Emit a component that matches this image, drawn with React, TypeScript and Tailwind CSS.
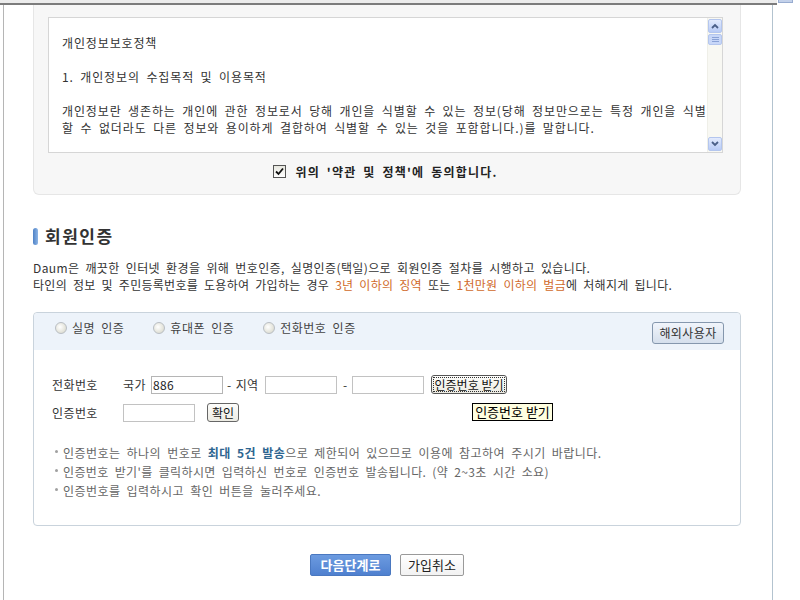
import React from "react";

const ko = "font-['Noto_Sans_CJK_KR','Noto_Sans_CJK_SC',sans-serif]";

const ScrollArrow = ({ up }: { up?: boolean }) => (
    <div className="w-[14px] h-[14px] rounded-[2px] border border-[#b4c6ee] bg-[linear-gradient(#e3ebfd,#b8cbf6)] flex items-center justify-center">
        <svg width="8" height="6" viewBox="0 0 8 6">
            <path d={up ? "M1 5 L4 2 L7 5" : "M1 1 L4 4 L7 1"} stroke="#4a5f88" strokeWidth="1.8" fill="none" />
        </svg>
    </div>
);

const Radio = () => (
    <span className="inline-block w-[12px] h-[12px] rounded-full border border-[#b9bec4] bg-[radial-gradient(circle_at_40%_40%,#ffffff,#d3d3c4)]" />
);

const Dot = () => <span className="inline-block w-[3px] h-[3px] bg-[#a0a0a0] rounded-full ml-[3px] mr-[5px] mb-[3px]" />;

const App = () => {
    return (
        <div className={`relative w-[800px] h-[600px] bg-white overflow-hidden text-[12px] text-[#333] ${ko}`}>
            <div className="h-[3px] w-[777px] bg-[#ececec]" />
            <div className="h-[2px] w-[777px] bg-[#7c7c7c]" />
            <div className="absolute top-0 left-[778px] w-[15px] h-[3px] bg-[#c3d1ea] border border-t-0 border-[#98acd0]" />

            <div className="ml-[3px] w-[770px] h-[595px] border-l border-l-[#b5b5b5] border-r border-r-[#b3c3cf] pl-[29px]">
                {/* terms box */}
                <div className="w-[708px] h-[190px] bg-[#f7f7f7] border border-t-0 border-[#e6e6e6] rounded-b-[6px] pt-[12px] pl-[14px]">
                    <div className="flex w-[675px] h-[136px] border border-[#d6d6d6] bg-white">
                        <div className="flex-1 pl-[13px] pt-[16px] leading-[17px] whitespace-pre text-[#333] tracking-[0.87px] [word-spacing:3px]">
                            <div>개인정보보호정책</div>
                            <div>&nbsp;</div>
                            <div>1. 개인정보의 수집목적 및 이용목적</div>
                            <div>&nbsp;</div>
                            <div>개인정보란 생존하는 개인에 관한 정보로서 당해 개인을 식별할 수 있는 정보(당해 정보만으로는 특정 개인을 식별</div>
                            <div>할 수 없더라도 다른 정보와 용이하게 결합하여 식별할 수 있는 것을 포함합니다.)를 말합니다.</div>
                        </div>
                        <div className="w-[15px] bg-[#f8f8f3] border-l border-[#efefe8] flex flex-col items-center pt-[1px] pb-[1px]">
                            <ScrollArrow up />
                            <div className="w-[14px] h-[11px] mt-[1px] rounded-[2px] border border-[#b4c6ee] bg-[#c8d7f8] flex flex-col items-center justify-center gap-[1px]">
                                <span className="w-[7px] h-[1px] bg-[#8aa2d6]" />
                                <span className="w-[7px] h-[1px] bg-[#8aa2d6]" />
                                <span className="w-[7px] h-[1px] bg-[#8aa2d6]" />
                            </div>
                            <div className="flex-1" />
                            <ScrollArrow />
                        </div>
                    </div>
                    <div className="w-[675px] mt-[10px] h-[17px] flex items-center justify-center">
                        <span className="w-[13px] h-[13px] border border-[#555] bg-[linear-gradient(#e8e8e0,#ffffff)] flex items-center justify-center mr-[9px]">
                            <svg width="9" height="9" viewBox="0 0 9 9">
                                <path d="M1 4.5 L3.5 7 L8 1.5" stroke="#111" strokeWidth="1.8" fill="none" />
                            </svg>
                        </span>
                        <span className="font-bold text-[#222] leading-[17px] tracking-[1.2px] [word-spacing:3px]">위의 '약관 및 정책'에 동의합니다.</span>
                    </div>
                </div>

                {/* heading */}
                <div className="mt-[31px] h-[20px] flex items-center">
                    <span className="w-[5px] h-[17px] rounded-[3px] bg-[linear-gradient(90deg,#4f82c6,#8db5e6)] mr-[7px]" />
                    <span className="text-[17px] font-bold text-[#333] leading-[20px] tracking-[1.5px]">회원인증</span>
                </div>

                <div className="mt-[13px] leading-[17px] whitespace-pre text-[#333] [word-spacing:3px]">
                    <div className="tracking-[0.38px]">Daum은 깨끗한 인터넷 환경을 위해 번호인증, 실명인증(택일)으로 회원인증 절차를 시행하고 있습니다.</div>
                    <div className="tracking-[0.28px]">
                        타인의 정보 및 주민등록번호를 도용하여 가입하는 경우 <span className="text-[#d0692a]">3년 이하의 징역</span> 또는{" "}
                        <span className="text-[#d0692a]">1천만원 이하의 벌금</span>에 처해지게 됩니다.
                    </div>
                </div>

                {/* auth box */}
                <div className="relative mt-[19px] w-[708px] h-[214px] border border-[#c9d3dc] rounded-[4px] overflow-visible">
                    <div className="h-[37px] bg-[#edf3fa] rounded-t-[4px] flex justify-between items-start pl-[21px] pr-[16px]">
                        <div className="flex items-center pt-[6px] h-[17px] box-content leading-[17px] text-[#444] tracking-[0.5px] [word-spacing:3px]">
                            <Radio />
                            <span className="ml-[5px] mr-[29px]">실명 인증</span>
                            <Radio />
                            <span className="ml-[5px] mr-[29px]">휴대폰 인증</span>
                            <Radio />
                            <span className="ml-[5px]">전화번호 인증</span>
                        </div>
                        <button className="mt-[9px] w-[72px] h-[22px] rounded-[3px] border border-[#8597ad] bg-[linear-gradient(#f1f5fb,#d5dfec)] text-[12px] text-[#333] leading-[20px] tracking-[0.4px]">
                            해외사용자
                        </button>
                    </div>

                    <div className="pl-[18px] pt-[25px]">
                        <div className="flex items-center h-[19px] text-[#333] tracking-[0.4px]">
                            <span className="w-[71px]">전화번호</span>
                            <span className="w-[28px]">국가</span>
                            <input
                                readOnly
                                value="886"
                                className="w-[72px] h-[18px] border border-[#b5b5b5] bg-white px-[1px] text-[12px] text-[#222] leading-[16px] outline-none"
                            />
                            <span className="ml-[4px] w-[34px] [word-spacing:1px]">- 지역</span>
                            <input readOnly className="ml-[4px] w-[72px] h-[18px] border border-[#c2c2c2] bg-white outline-none" />
                            <span className="ml-[6px] w-[9px]">-</span>
                            <input readOnly className="w-[72px] h-[18px] border border-[#c2c2c2] bg-white outline-none" />
                            <button className="ml-[7px] w-[76px] h-[19px] rounded-[3px] border border-[#555] bg-[linear-gradient(#fdfdfb,#ecebe3)] p-[1px] text-[12px] text-[#111] tracking-normal">
                                <span className="flex items-center justify-center w-full h-full border border-dotted border-[#333] leading-[13px]">인증번호 받기</span>
                            </button>
                        </div>
                        <div className="flex items-center h-[19px] mt-[9px] text-[#333] tracking-[0.4px]">
                            <span className="w-[71px]">인증번호</span>
                            <input readOnly className="w-[72px] h-[18px] border border-[#c2c2c2] bg-white outline-none" />
                            <button className="ml-[12px] w-[32px] h-[19px] rounded-[3px] border border-[#666] bg-[linear-gradient(#fdfdfb,#ecebe3)] text-[12px] text-[#111] leading-[17px] tracking-normal">
                                확인
                            </button>
                        </div>

                        <div className="mt-[21px] leading-[19px] text-[#666] whitespace-pre [word-spacing:3px]">
                            <div className="flex items-center tracking-[0.45px]">
                                <Dot />
                                인증번호는 하나의 번호로 <span className="font-bold text-[#2d6590]">최대 5건 발송</span>으로 제한되어 있으므로 이용에 참고하여 주시기 바랍니다.
                            </div>
                            <div className="flex items-center tracking-[0.37px]">
                                <Dot />
                                인증번호 받기'를 클릭하시면 입력하신 번호로 인증번호 발송됩니다. (약 2~3초 시간 소요)
                            </div>
                            <div className="flex items-center tracking-[0.45px]">
                                <Dot />
                                인증번호를 입력하시고 확인 버튼을 눌러주세요.
                            </div>
                        </div>
                    </div>

                    <div className="absolute left-[438px] top-[90px] w-[81px] h-[18px] border border-black bg-[#ffffe1] text-[13px] text-black leading-[16px] text-center">
                        인증번호 받기
                    </div>
                </div>

                {/* bottom buttons */}
                <div className="w-[708px] mt-[28px] flex justify-center gap-[9px]">
                    <button className="w-[81px] h-[22px] rounded-[2px] border border-[#4a78c0] bg-[linear-gradient(#6c9be0,#4f80cf)] text-[13px] font-bold text-white leading-[20px]">
                        다음단계로
                    </button>
                    <button className="w-[64px] h-[22px] rounded-[2px] border border-[#9a9a9a] bg-[linear-gradient(#ffffff,#f2f2f2)] text-[13px] text-[#222] leading-[20px]">
                        가입취소
                    </button>
                </div>
            </div>
        </div>
    );
};

export default App;
